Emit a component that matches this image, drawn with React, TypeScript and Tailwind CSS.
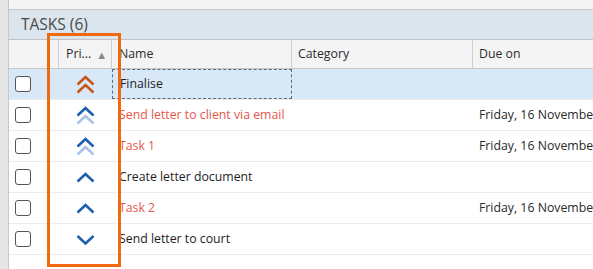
import React from "react";

const BLUE = "#1c5fb0";
const LIGHT = "#a6c4e6";
const ORANGE = "#c9531c";

function Chevron({ color, y, down = false }: { color: string; y: number; down?: boolean }) {
  const d = down
    ? `M1.5 ${y} L9.5 ${y + 7.5} L17.5 ${y}`
    : `M1.5 ${y + 7.5} L9.5 ${y} L17.5 ${y + 7.5}`;
  return <path d={d} fill="none" stroke={color} strokeWidth={2.6} strokeLinecap="butt" strokeLinejoin="miter" />;
}

function Priority({ kind }: { kind: "urgent" | "high" | "normal" | "low" }) {
  return (
    <svg width="19" height="19" viewBox="0 0 19 19">
      {kind === "urgent" && (
        <>
          <Chevron color={ORANGE} y={2} />
          <Chevron color={ORANGE} y={10} />
        </>
      )}
      {kind === "high" && (
        <>
          <Chevron color={BLUE} y={2} />
          <Chevron color={LIGHT} y={10} />
        </>
      )}
      {kind === "normal" && <Chevron color={BLUE} y={6} />}
      {kind === "low" && <Chevron color={BLUE} y={6} down />}
    </svg>
  );
}

const rows: { name: string; red: boolean; kind: "urgent" | "high" | "normal" | "low"; due: string }[] = [
  { name: "Finalise", red: false, kind: "urgent", due: "" },
  { name: "Send letter to client via email", red: true, kind: "high", due: "Friday, 16 November" },
  { name: "Task 1", red: true, kind: "high", due: "Friday, 16 November" },
  { name: "Create letter document", red: false, kind: "normal", due: "" },
  { name: "Task 2", red: true, kind: "normal", due: "Friday, 16 November" },
  { name: "Send letter to court", red: false, kind: "low", due: "" },
];

export default function App() {
  return (
    <div
      className="relative flex w-[593px] h-[269px] overflow-hidden bg-white text-[12.3px] text-[#1e1e1e]"
      style={{ fontFamily: '"Open Sans", "Noto Sans", sans-serif' }}
    >
      <div className="w-[9px] shrink-0 bg-[#e6e6e6] border-r border-[#c8c8c8]" />
      <div className="flex-1 flex flex-col min-w-0">
        <div className="h-[10px] shrink-0 bg-[#f5f5f5] border-b border-[#c6c6c6]" />
        <div className="h-[30px] shrink-0 bg-[#dbe5ee] border-b border-[#c2c2c2] flex items-center pl-[12px] text-[15.5px] text-[#4a4a4a]">
          TASKS (6)
        </div>
        <div className="h-[29px] shrink-0 bg-[#f4f4f4] border-b border-[#c8c8c8] flex text-[#2a2a2a]">
          <div className="w-[50px] shrink-0 border-r border-[#cfcfcf]" />
          <div className="w-[53px] shrink-0 border-r border-[#cfcfcf] flex items-center pl-[7px] gap-[5px]">
            <span>Pri...</span>
            <span className="text-[11px] text-[#8a8a8a] leading-none">▲</span>
          </div>
          <div className="w-[180px] shrink-0 border-r border-[#cfcfcf] flex items-center pl-[7px]">Name</div>
          <div className="w-[181px] shrink-0 border-r border-[#cfcfcf] flex items-center pl-[6px]">Category</div>
          <div className="flex-1 flex items-center pl-[6px]">Due on</div>
        </div>
        {rows.map((r, i) => (
          <div
            key={i}
            className={`h-[31px] shrink-0 border-b border-[#ececec] flex items-center ${i === 0 ? "bg-[#d9e8f7]" : "bg-white"}`}
          >
            <div className="w-[50px] shrink-0 flex items-center pl-[6px]">
              <div className="w-[16px] h-[16px] rounded-[3px] border border-[#555] bg-white" />
            </div>
            <div className="w-[53px] shrink-0 flex justify-center pr-[1px]">
              <Priority kind={r.kind} />
            </div>
            <div
              className={`w-[180px] shrink-0 h-full flex items-center pl-[7px] whitespace-nowrap ${
                i === 0 ? "border border-dashed border-[#5a6a7a]" : ""
              } ${r.red ? "text-[#e5574a]" : "text-[#1e1e1e]"}`}
            >
              {r.name}
            </div>
            <div className="w-[181px] shrink-0" />
            <div className="flex-1 pl-[6px] whitespace-nowrap overflow-hidden text-[#2a2a2a]">{r.due}</div>
          </div>
        ))}
      </div>
      <div className="absolute left-[47px] top-[33px] w-[74px] h-[234px] border-[3px] border-[#f0690f]" />
    </div>
  );
}
